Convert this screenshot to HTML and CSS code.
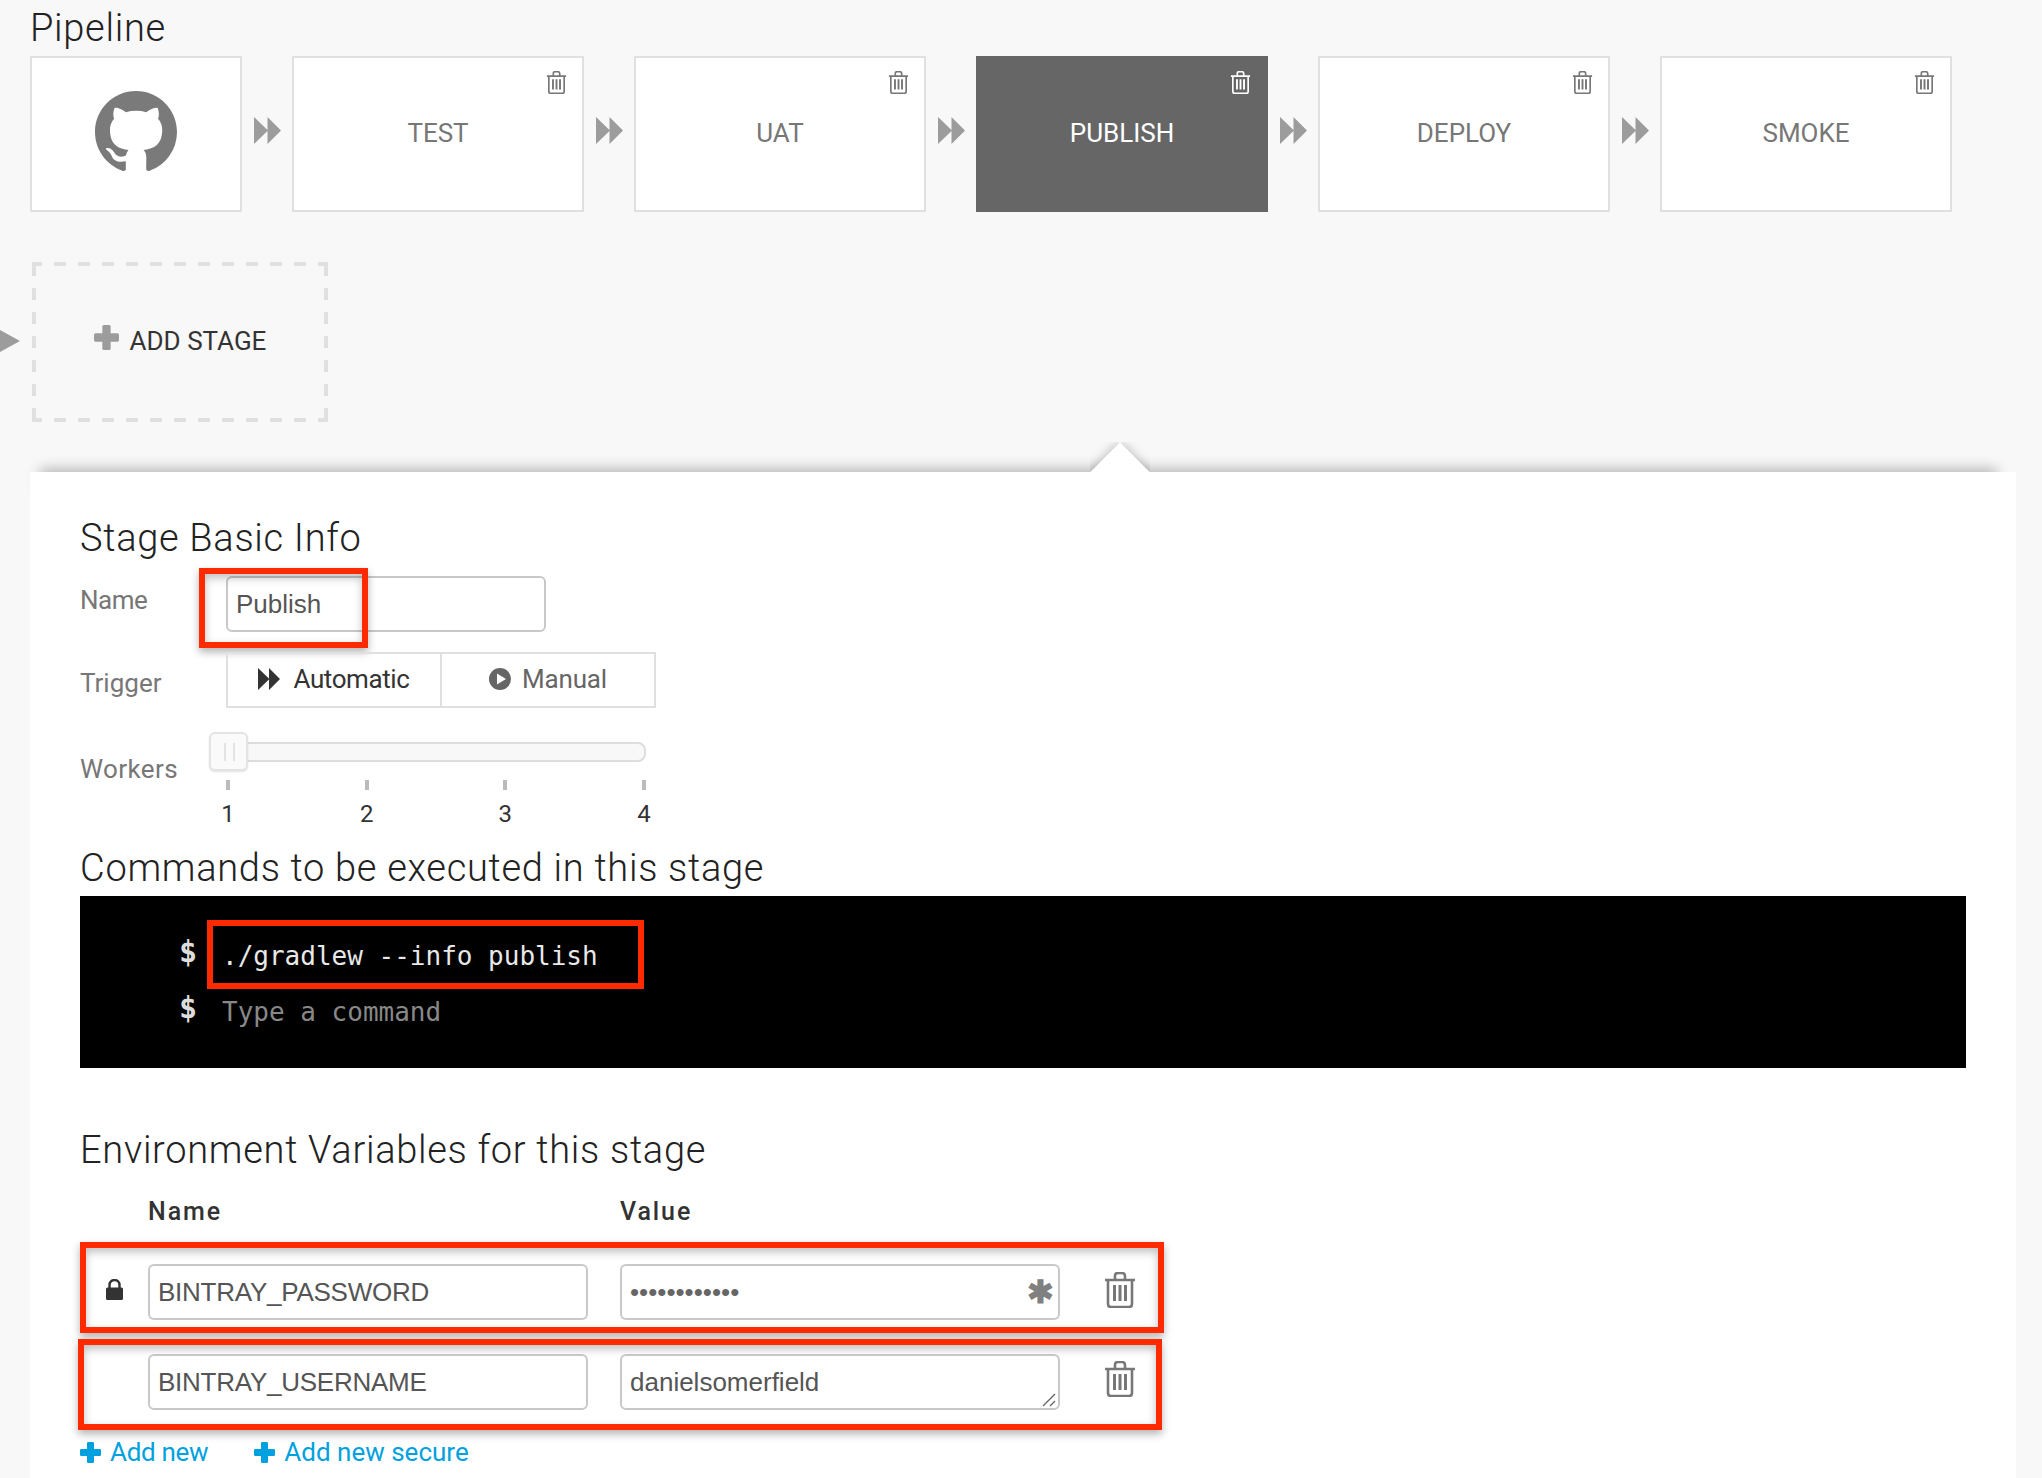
FILE: index.html
```html
<!DOCTYPE html>
<html lang="en">
<head>
    <meta charset="UTF-8">
    <meta name="viewport" content="width=device-width, initial-scale=1.0">
    <title>Pipeline</title>
    <link rel="stylesheet" href="styles.css">
</head>
<body>
    <svg class="icon-defs" width="0" height="0">
        <symbol id="trash" viewBox="0 0 32 36">
            <path d="M1 8h30M11 7V4q0-3 3-3h4q3 0 3 3v3M4 8v24q0 3 3 3h18q3 0 3-3V8" fill="none" stroke="currentColor" stroke-width="2.6"/>
            <path d="M10.500 13v16M16 13v16M21.500 13v16" fill="none" stroke="currentColor" stroke-width="3"/>
        </symbol>
        <symbol id="arrows" viewBox="0 0 27 27">
            <path d="M0 0l14 13.500L0 27zM13.500 0L27 13.500 13.500 27z" fill="currentColor"/>
        </symbol>
        <symbol id="plus" viewBox="0 0 24 24">
            <path d="M8 1.500q0-1.500 1.500-1.500h5q1.500 0 1.500 1.500V8h6.500q1.500 0 1.500 1.500v5q0 1.500-1.500 1.500H16v6.500q0 1.500-1.500 1.500h-5Q8 24 8 22.500V16H1.500Q0 16 0 14.500v-5Q0 8 1.500 8H8z" fill="currentColor"/>
        </symbol>
    </svg>

    <div class="pipeline">
        <h2 class="section-title">Pipeline</h2>
        <div class="stages">
            <div class="stage stage-source">
                <svg class="github-icon" viewBox="0 0 16 16">
                    <path fill="currentColor" d="M8 0C3.580 0 0 3.580 0 8c0 3.540 2.290 6.530 5.470 7.590.4.070.55-.17.55-.38 0-.19-.01-.82-.01-1.490-2.010.37-2.530-.49-2.690-.94-.09-.23-.48-.94-.82-1.130-.28-.15-.68-.52-.01-.53.63-.01 1.080.58 1.230.82.72 1.210 1.870.87 2.330.66.070-.52.28-.87.51-1.070-1.780-.2-3.640-.89-3.640-3.950 0-.87.31-1.590.82-2.150-.08-.2-.36-1.020.08-2.120 0 0 .67-.21 2.200.82.64-.18 1.320-.27 2-.27s1.360.09 2 .27c1.530-1.040 2.200-.82 2.200-.82.44 1.100.16 1.920.08 2.120.51.56.82 1.270.82 2.150 0 3.070-1.870 3.750-3.650 3.950.29.25.54.73.54 1.480 0 1.070-.01 1.930-.01 2.200 0 .21.15.46.55.38A8.010 8.010 0 0 0 16 8c0-4.420-3.580-8-8-8z"/>
                </svg>
            </div>
            <svg class="stage-arrow"><use href="#arrows"/></svg>
            <div class="stage">
                <svg class="stage-trash"><use href="#trash"/></svg>
                <span>TEST</span>
            </div>
            <svg class="stage-arrow"><use href="#arrows"/></svg>
            <div class="stage">
                <svg class="stage-trash"><use href="#trash"/></svg>
                <span>UAT</span>
            </div>
            <svg class="stage-arrow"><use href="#arrows"/></svg>
            <div class="stage stage-active">
                <svg class="stage-trash"><use href="#trash"/></svg>
                <span>PUBLISH</span>
            </div>
            <svg class="stage-arrow"><use href="#arrows"/></svg>
            <div class="stage">
                <svg class="stage-trash"><use href="#trash"/></svg>
                <span>DEPLOY</span>
            </div>
            <svg class="stage-arrow"><use href="#arrows"/></svg>
            <div class="stage">
                <svg class="stage-trash"><use href="#trash"/></svg>
                <span>SMOKE</span>
            </div>
        </div>

        <div class="add-row">
            <div class="add-arrow"></div>
            <div class="add-stage">
                <svg class="add-plus"><use href="#plus"/></svg>
                <span>ADD STAGE</span>
            </div>
        </div>
    </div>

    <div class="panel">
        <div class="panel-notch"></div>

        <h2 class="section-title panel-title">Stage Basic Info</h2>
        <div class="form-row row-name">
            <label class="form-label">Name</label>
            <div class="name-field">
                <div class="field">Publish</div>
                <div class="callout callout-name"></div>
            </div>
        </div>
        <div class="form-row row-trigger">
            <label class="form-label">Trigger</label>
            <div class="segments">
                <div class="segment segment-on">
                    <svg class="segment-icon"><use href="#arrows"/></svg>
                    Automatic
                </div>
                <div class="segment">
                    <svg class="segment-icon" viewBox="0 0 22 22">
                        <circle cx="11" cy="11" r="11" fill="currentColor"/>
                        <path d="M8 5.500l9 5.500-9 5.500z" fill="#fff"/>
                    </svg>
                    Manual
                </div>
            </div>
        </div>
        <div class="form-row row-workers">
            <label class="form-label">Workers</label>
            <div class="slider">
                <div class="slider-track"></div>
                <div class="slider-handle"></div>
                <div class="slider-scale">
                    <div class="slider-mark">1</div>
                    <div class="slider-mark">2</div>
                    <div class="slider-mark">3</div>
                    <div class="slider-mark">4</div>
                </div>
            </div>
        </div>

        <h2 class="section-title commands-title">Commands to be executed in this stage</h2>
        <div class="terminal">
            <div class="terminal-line">
                <span class="prompt">$</span>
                <span class="command">./gradlew --info publish</span>
                <div class="callout callout-command"></div>
            </div>
            <div class="terminal-line">
                <span class="prompt">$</span>
                <span class="command command-empty">Type a command</span>
            </div>
        </div>

        <h2 class="section-title env-title">Environment Variables for this stage</h2>
        <div class="env-head">
            <div class="env-col">Name</div>
            <div class="env-col">Value</div>
        </div>
        <div class="env-row env-row-first">
            <svg class="env-lock" viewBox="0 0 17 21">
                <path d="M3.500 9V6a5 5 0 0 1 10 0v3" fill="none" stroke="currentColor" stroke-width="2.400"/>
                <rect y="8.500" width="17" height="12.500" rx="1.500" fill="currentColor"/>
            </svg>
            <div class="field env-field env-key">BINTRAY_PASSWORD</div>
            <div class="field env-field env-secret">
                <span class="secret-dots">&bull;&bull;&bull;&bull;&bull;&bull;&bull;&bull;&bull;&bull;&bull;&bull;</span>
                <span class="secret-star">&#10033;</span>
            </div>
            <svg class="env-trash"><use href="#trash"/></svg>
        </div>
        <div class="env-row env-row-second">
            <div class="field env-field env-key">BINTRAY_USERNAME</div>
            <div class="field env-field">
                danielsomerfield
                <svg class="resize-grip" viewBox="0 0 14 14">
                    <path d="M1 13L13 1M8 13l5-5" fill="none" stroke="#666" stroke-width="1.400"/>
                </svg>
            </div>
            <svg class="env-trash"><use href="#trash"/></svg>
        </div>
        <div class="env-links">
            <a class="env-link env-link-short"><svg class="link-plus"><use href="#plus"/></svg>Add new</a>
            <a class="env-link"><svg class="link-plus"><use href="#plus"/></svg>Add new secure</a>
        </div>
    </div>
</body>
</html>
```

FILE: styles.css
```css
:root {
    --page-bg: #f8f8f8;
    --card-border: #e0e0e0;
    --field-border: #c8c8c8;
    --arrow-color: #9c9c9c;
    --muted-text: #777;
    --callout: #ff2a00;
    --link: #00a1de;
}

* {
    margin: 0;
    padding: 0;
    box-sizing: border-box;
}

html, body {
    height: 1478px;
    overflow: hidden;
}

body {
    font-family: Roboto, Arial, sans-serif;
    background: var(--page-bg);
    color: #333;
}

.icon-defs {
    position: absolute;
}

.section-title {
    font-size: 38px;
    font-weight: 300;
    line-height: 42px;
    color: #222;
    letter-spacing: 0.7px;
}

/* Pipeline */
.pipeline {
    padding: 7px 0 0 30px;
    height: 472px;
}

.stages {
    display: flex;
    align-items: center;
    margin-top: 7px;
}

.stage {
    position: relative;
    width: 292px;
    height: 156px;
    display: flex;
    align-items: center;
    justify-content: center;
    padding-bottom: 3px;
    background: #fff;
    border: 2px solid var(--card-border);
    font-size: 26px;
    color: #777;
}

.stage-source {
    width: 212px;
    padding-bottom: 5px;
}

.stage-active {
    background: #666;
    border-color: #666;
    color: #fff;
}

.github-icon {
    width: 82px;
    height: 82px;
    color: #7a7a7a;
}

.stage-trash {
    position: absolute;
    top: 13px;
    right: 15px;
    width: 21px;
    height: 23px;
}

.stage-arrow {
    width: 27px;
    height: 27px;
    margin: -7px 11px 0 12px;
    color: var(--arrow-color);
}

.add-row {
    display: flex;
    align-items: center;
    margin-top: 50px;
    margin-left: -30px;
}

.add-arrow {
    width: 0;
    height: 0;
    border-style: solid;
    border-width: 11px 0 11px 20px;
    border-color: transparent transparent transparent var(--arrow-color);
    margin: -3px 12px 0 0;
}

/* the dashes are longer than a dashed border gives */
.add-stage {
    width: 296px;
    height: 160px;
    display: flex;
    align-items: center;
    justify-content: center;
    gap: 11px;
    padding-bottom: 2px;
    background:
        linear-gradient(90deg, var(--card-border) 50%, transparent 50%) -2px 0 / 24px 4px repeat-x,
        linear-gradient(90deg, var(--card-border) 50%, transparent 50%) -2px 100% / 24px 4px repeat-x,
        linear-gradient(180deg, var(--card-border) 50%, transparent 50%) 0 2px / 4px 24px repeat-y,
        linear-gradient(180deg, var(--card-border) 50%, transparent 50%) 100% 2px / 4px 24px repeat-y;
    font-size: 26px;
    color: #333;
}

.add-plus {
    width: 25px;
    height: 25px;
    margin-top: -8px;
    color: var(--arrow-color);
}

/* Stage panel */
.panel {
    position: relative;
    width: 1986px;
    height: 1006px;
    margin-left: 30px;
    padding: 0 50px;
    background: #fff;
}

.panel::before {
    content: "";
    position: absolute;
    top: 0;
    left: 10px;
    right: 19px;
    height: 20px;
    box-shadow: 0 -3px 14px rgba(0, 0, 0, 0.28);
    z-index: -1;
}

.panel-notch {
    position: absolute;
    top: -30px;
    left: 1060px;
    width: 60px;
    height: 30px;
    overflow: hidden;
}

.panel-notch::before {
    content: "";
    position: absolute;
    top: 9px;
    left: 9px;
    width: 42px;
    height: 42px;
    background: #fff;
    transform: rotate(45deg);
    box-shadow: 0 0 12px rgba(0, 0, 0, 0.28);
}

.panel-title {
    position: relative;
    padding-top: 45px;
    line-height: 42px;
}

.form-row {
    position: relative;
    display: flex;
}

.form-label {
    width: 146px;
    font-size: 26px;
    color: var(--muted-text);
    line-height: 30px;
}

.field {
    height: 56px;
    border: 2px solid var(--field-border);
    border-radius: 6px;
    background: #fff;
    padding: 0 8px;
    font-family: "Liberation Sans", Arial, sans-serif;
    font-size: 26px;
    line-height: 52px;
    color: #555;
}

.row-name {
    margin-top: 17px;
}

.row-name .form-label {
    padding-top: 9px;
    letter-spacing: -0.5px;
}

.name-field {
    position: relative;
    width: 320px;
}

/* red annotation boxes on top of the screenshot */
.callout {
    position: absolute;
    border: 6px solid var(--callout);
    box-shadow: 0 4px 8px rgba(0, 0, 0, 0.3), inset 0 4px 8px rgba(0, 0, 0, 0.25);
}

.callout-name {
    top: -8px;
    left: -27px;
    width: 169px;
    height: 80px;
}

.row-trigger {
    margin-top: 20px;
}

.row-trigger .form-label {
    padding-top: 16px;
}

.segments {
    display: flex;
    width: 430px;
    height: 56px;
    border: 2px solid var(--card-border);
}

.segment {
    flex: 1;
    display: flex;
    align-items: center;
    justify-content: center;
    gap: 11px;
    padding-bottom: 2px;
    font-size: 26px;
    letter-spacing: -0.2px;
    color: #666;
}

.segment + .segment {
    border-left: 2px solid var(--card-border);
}

.segment-on {
    gap: 13px;
    color: #333;
    letter-spacing: -0.4px;
}

.segment-icon {
    width: 22px;
    height: 22px;
}

.row-workers {
    margin-top: 24px;
}

.row-workers .form-label {
    padding-top: 22px;
    letter-spacing: 0.4px;
}

.slider {
    position: relative;
    width: 437px;
    height: 100px;
    margin-left: -17px;
}

.slider-track {
    position: absolute;
    top: 10px;
    left: 20px;
    right: 0;
    height: 20px;
    background: #f8f8f8;
    border: 2px solid #ddd;
    border-radius: 8px;
}

.slider-handle {
    position: absolute;
    top: 0;
    left: 0;
    width: 39px;
    height: 39px;
    background: #fafafa;
    border: 2px solid #e4e4e4;
    border-radius: 6px;
    box-shadow: 0 1px 2px rgba(0, 0, 0, 0.12);
}

.slider-handle::before {
    content: "";
    position: absolute;
    top: 9px;
    left: 13px;
    width: 7px;
    height: 18px;
    border-left: 2px solid #e2e2e2;
    border-right: 2px solid #e2e2e2;
}

.slider-scale {
    position: absolute;
    top: 48px;
    left: 0;
    width: 416px;
    margin-left: 19px;
    display: flex;
    justify-content: space-between;
}

.slider-mark {
    width: 0;
    display: flex;
    flex-direction: column;
    align-items: center;
    font-size: 24px;
    line-height: 28px;
    color: #333;
}

.slider-mark::before {
    content: "";
    flex: none;
    width: 4px;
    height: 10px;
    margin-bottom: 10px;
    background: #bbb;
}

.commands-title {
    margin-top: 15px;
}

.terminal {
    height: 172px;
    margin-top: 7px;
    padding: 38px 0 0 99px;
    background: #000;
    color: #e8e8e8;
    font-family: "DejaVu Sans Mono", "Liberation Mono", monospace;
    font-size: 26px;
}

.terminal-line {
    position: relative;
    display: flex;
    gap: 25px;
    height: 56px;
    line-height: 44px;
}

.prompt {
    width: 18px;
    margin-top: -4px;
    font-size: 30px;
    font-weight: bold;
    color: #ddd;
}

.command-empty {
    color: #888;
}

.callout-command {
    top: -14px;
    left: 28px;
    width: 437px;
    height: 69px;
    box-shadow: none;
}

.env-title {
    margin-top: 61px;
}

.env-head {
    display: flex;
    margin-top: 26px;
    padding-left: 68px;
    font-size: 25px;
    font-weight: 500;
    letter-spacing: 1.9px;
    line-height: 30px;
    color: #333;
}

.env-col {
    width: 472px;
}

.env-row {
    display: flex;
    align-items: center;
    height: 91px;
    border: 6px solid var(--callout);
    box-shadow: 0 4px 8px rgba(0, 0, 0, 0.3), inset 0 4px 8px rgba(0, 0, 0, 0.25);
    width: 1084px;
}

.env-row-first {
    margin-top: 15px;
    padding-top: 9px;
}

.env-row-second {
    margin-top: 6px;
    margin-left: -2px;
    padding-left: 64px;
    padding-bottom: 6px;
}

.env-lock {
    width: 17px;
    height: 21px;
    margin: -5px 25px 0 20px;
    color: #333;
}

.env-field {
    position: relative;
    width: 440px;
    flex: none;
}

.env-field + .env-field {
    margin-left: 32px;
}

.env-key {
    letter-spacing: -0.25px;
}

.env-secret {
    display: flex;
    justify-content: space-between;
}

.secret-dots {
    color: #666;
}

.secret-star {
    font-size: 32px;
    font-weight: bold;
    color: #808080;
    margin-right: -4px;
}

.resize-grip {
    position: absolute;
    right: 2px;
    bottom: 1px;
    width: 14px;
    height: 14px;
}

.env-trash {
    width: 32px;
    height: 36px;
    margin: -5px 0 0 44px;
    color: #777;
}

.env-links {
    display: flex;
    gap: 46px;
    margin-top: 7px;
    font-size: 26px;
    line-height: 30px;
    color: var(--link);
}

.env-link {
    display: flex;
    align-items: center;
    gap: 9px;
}

.env-link-short {
    letter-spacing: -0.3px;
}

.link-plus {
    width: 21px;
    height: 21px;
}
```
